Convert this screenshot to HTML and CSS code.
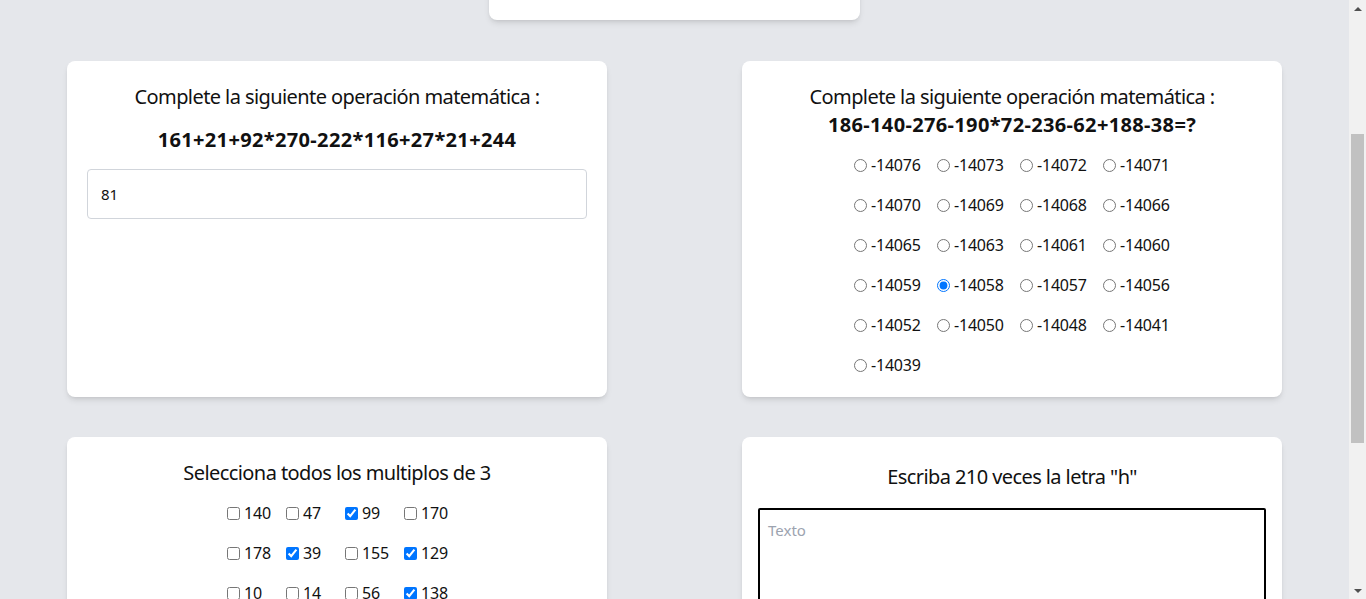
FILE: index.html
```html
<!DOCTYPE html>
<html lang="es">
<head>
<meta charset="utf-8">
<title>Captcha</title>
<link rel="stylesheet" href="styles.css">
</head>
<body>
<main class="page">
  <section class="top-card"></section>

  <div class="grid">
    <section class="card">
      <p class="title">Complete la siguiente operación matemática :</p>
      <p class="expr expr-gap">161+21+92*270-222*116+27*21+244</p>
      <input class="answer" type="text" value="81">
    </section>

    <section class="card">
      <p class="title title-tight">Complete la siguiente operación matemática :</p>
      <p class="expr">186-140-276-190*72-236-62+188-38=?</p>
      <div class="options radios">
        <label class="opt"><input type="radio" name="op"><span>-14076</span></label>
        <label class="opt"><input type="radio" name="op"><span>-14073</span></label>
        <label class="opt"><input type="radio" name="op"><span>-14072</span></label>
        <label class="opt"><input type="radio" name="op"><span>-14071</span></label>
        <label class="opt"><input type="radio" name="op"><span>-14070</span></label>
        <label class="opt"><input type="radio" name="op"><span>-14069</span></label>
        <label class="opt"><input type="radio" name="op"><span>-14068</span></label>
        <label class="opt"><input type="radio" name="op"><span>-14066</span></label>
        <label class="opt"><input type="radio" name="op"><span>-14065</span></label>
        <label class="opt"><input type="radio" name="op"><span>-14063</span></label>
        <label class="opt"><input type="radio" name="op"><span>-14061</span></label>
        <label class="opt"><input type="radio" name="op"><span>-14060</span></label>
        <label class="opt"><input type="radio" name="op"><span>-14059</span></label>
        <label class="opt"><input type="radio" name="op" checked><span>-14058</span></label>
        <label class="opt"><input type="radio" name="op"><span>-14057</span></label>
        <label class="opt"><input type="radio" name="op"><span>-14056</span></label>
        <label class="opt"><input type="radio" name="op"><span>-14052</span></label>
        <label class="opt"><input type="radio" name="op"><span>-14050</span></label>
        <label class="opt"><input type="radio" name="op"><span>-14048</span></label>
        <label class="opt"><input type="radio" name="op"><span>-14041</span></label>
        <label class="opt"><input type="radio" name="op"><span>-14039</span></label>
      </div>
    </section>

    <section class="card">
      <p class="title title-tight">Selecciona todos los multiplos de 3</p>
      <div class="options checks">
        <label class="opt"><input type="checkbox"><span>140</span></label>
        <label class="opt"><input type="checkbox"><span>47</span></label>
        <label class="opt"><input type="checkbox" checked><span>99</span></label>
        <label class="opt"><input type="checkbox"><span>170</span></label>
        <label class="opt"><input type="checkbox"><span>178</span></label>
        <label class="opt"><input type="checkbox" checked><span>39</span></label>
        <label class="opt"><input type="checkbox"><span>155</span></label>
        <label class="opt"><input type="checkbox" checked><span>129</span></label>
        <label class="opt"><input type="checkbox"><span>10</span></label>
        <label class="opt"><input type="checkbox"><span>14</span></label>
        <label class="opt"><input type="checkbox"><span>56</span></label>
        <label class="opt"><input type="checkbox" checked><span>138</span></label>
        <label class="opt"><input type="checkbox"><span>61</span></label>
        <label class="opt"><input type="checkbox"><span>93</span></label>
        <label class="opt"><input type="checkbox"><span>121</span></label>
        <label class="opt"><input type="checkbox"><span>200</span></label>
        <label class="opt"><input type="checkbox"><span>7</span></label>
        <label class="opt"><input type="checkbox"><span>84</span></label>
        <label class="opt"><input type="checkbox"><span>163</span></label>
        <label class="opt"><input type="checkbox"><span>25</span></label>
      </div>
    </section>

    <section class="card card-text">
      <p class="title title-low">Escriba 210 veces la letra "h"</p>
      <textarea class="text" placeholder="Texto"></textarea>
    </section>
  </div>
</main>

<div class="scrollbar" aria-hidden="true">
  <div class="sb-btn"><span class="arrow-up"></span></div>
  <div class="sb-track"><div class="sb-thumb"></div></div>
  <div class="sb-btn"><span class="arrow-down"></span></div>
</div>

<script src="script.js"></script>
</body>
</html>
```

FILE: styles.css
```css
* { box-sizing: border-box; }

html, body {
  margin: 0;
  padding: 0;
}

body {
  background: #e5e7eb;
  font-family: "Noto Sans", "Open Sans", sans-serif;
  color: #111;
  padding-right: 17px;
}

.page {
  padding: 40px 0 60px;
  display: flex;
  flex-direction: column;
  align-items: center;
  gap: 41px;
}

.top-card {
  width: 371px;
  height: 207px;
  background: #fff;
  border-radius: 8px;
  box-shadow: 0 4px 6px -1px rgba(0,0,0,.1), 0 2px 4px -2px rgba(0,0,0,.1);
}

.grid {
  display: grid;
  grid-template-columns: 540px 540px;
  column-gap: 135px;
  row-gap: 40px;
}

.card {
  background: #fff;
  border-radius: 8px;
  box-shadow: 0 4px 6px -1px rgba(0,0,0,.1), 0 2px 4px -2px rgba(0,0,0,.1);
  padding: 22px 20px 20px;
  display: flex;
  flex-direction: column;
  align-items: center;
}

.card-text {
  padding: 26px 16px 20px;
}

.title {
  margin: 0 0 15px;
  font-size: 20px;
  line-height: 28px;
  letter-spacing: -0.58px;
  text-align: center;
  white-space: nowrap;
}

.title-tight { margin-bottom: 0; }
.title-low { margin-bottom: 17px; }

.expr {
  margin: 0;
  font-size: 20px;
  line-height: 28px;
  font-weight: 700;
  letter-spacing: 0.35px;
  text-align: center;
  white-space: nowrap;
}

.expr-gap { margin-bottom: 15px; }

.answer {
  width: 100%;
  height: 50px;
  border: 1px solid #d1d5db;
  border-radius: 4px;
  padding: 0 13px;
  font-family: inherit;
  font-size: 15px;
  color: #111;
  background: #fff;
}

.options {
  display: grid;
  grid-auto-rows: 24px;
  row-gap: 16px;
  column-gap: 16px;
  margin-top: 14px;
}

.radios { grid-template-columns: repeat(4, 67px); }
.checks { grid-template-columns: repeat(4, 43px); }

.opt {
  display: flex;
  align-items: center;
  gap: 4px;
  font-size: 16px;
  line-height: 24px;
  letter-spacing: -0.2px;
  white-space: nowrap;
}

.opt input {
  margin: 0;
  width: 13px;
  height: 13px;
  flex: none;
}

.text {
  width: 100%;
  height: 280px;
  border: 2px solid #000;
  border-radius: 2px;
  padding: 10px 8px;
  font-family: inherit;
  font-size: 15px;
  resize: none;
  background: #fff;
}

.text::placeholder { color: #9ca3af; }

/* classic scrollbar, drawn over the right edge of the window */
.scrollbar {
  position: fixed;
  top: 0;
  right: 0;
  width: 17px;
  height: 100vh;
  background: #f1f1f1;
  display: flex;
  flex-direction: column;
}

.sb-btn {
  height: 17px;
  flex: none;
  display: flex;
  align-items: center;
  justify-content: center;
}

.arrow-up {
  width: 0;
  height: 0;
  border-left: 4px solid transparent;
  border-right: 4px solid transparent;
  border-bottom: 4px solid #505050;
}

.arrow-down {
  width: 0;
  height: 0;
  border-left: 4px solid transparent;
  border-right: 4px solid transparent;
  border-top: 4px solid #505050;
}

.sb-track {
  flex: 1;
  padding: 117px 2px 0;
}

.sb-thumb {
  height: 309px;
  background: #c1c1c1;
}
```

FILE: script.js
```js
window.scrollTo(0, 227);
window.addEventListener('load', function () { window.scrollTo(0, 227); });
```
